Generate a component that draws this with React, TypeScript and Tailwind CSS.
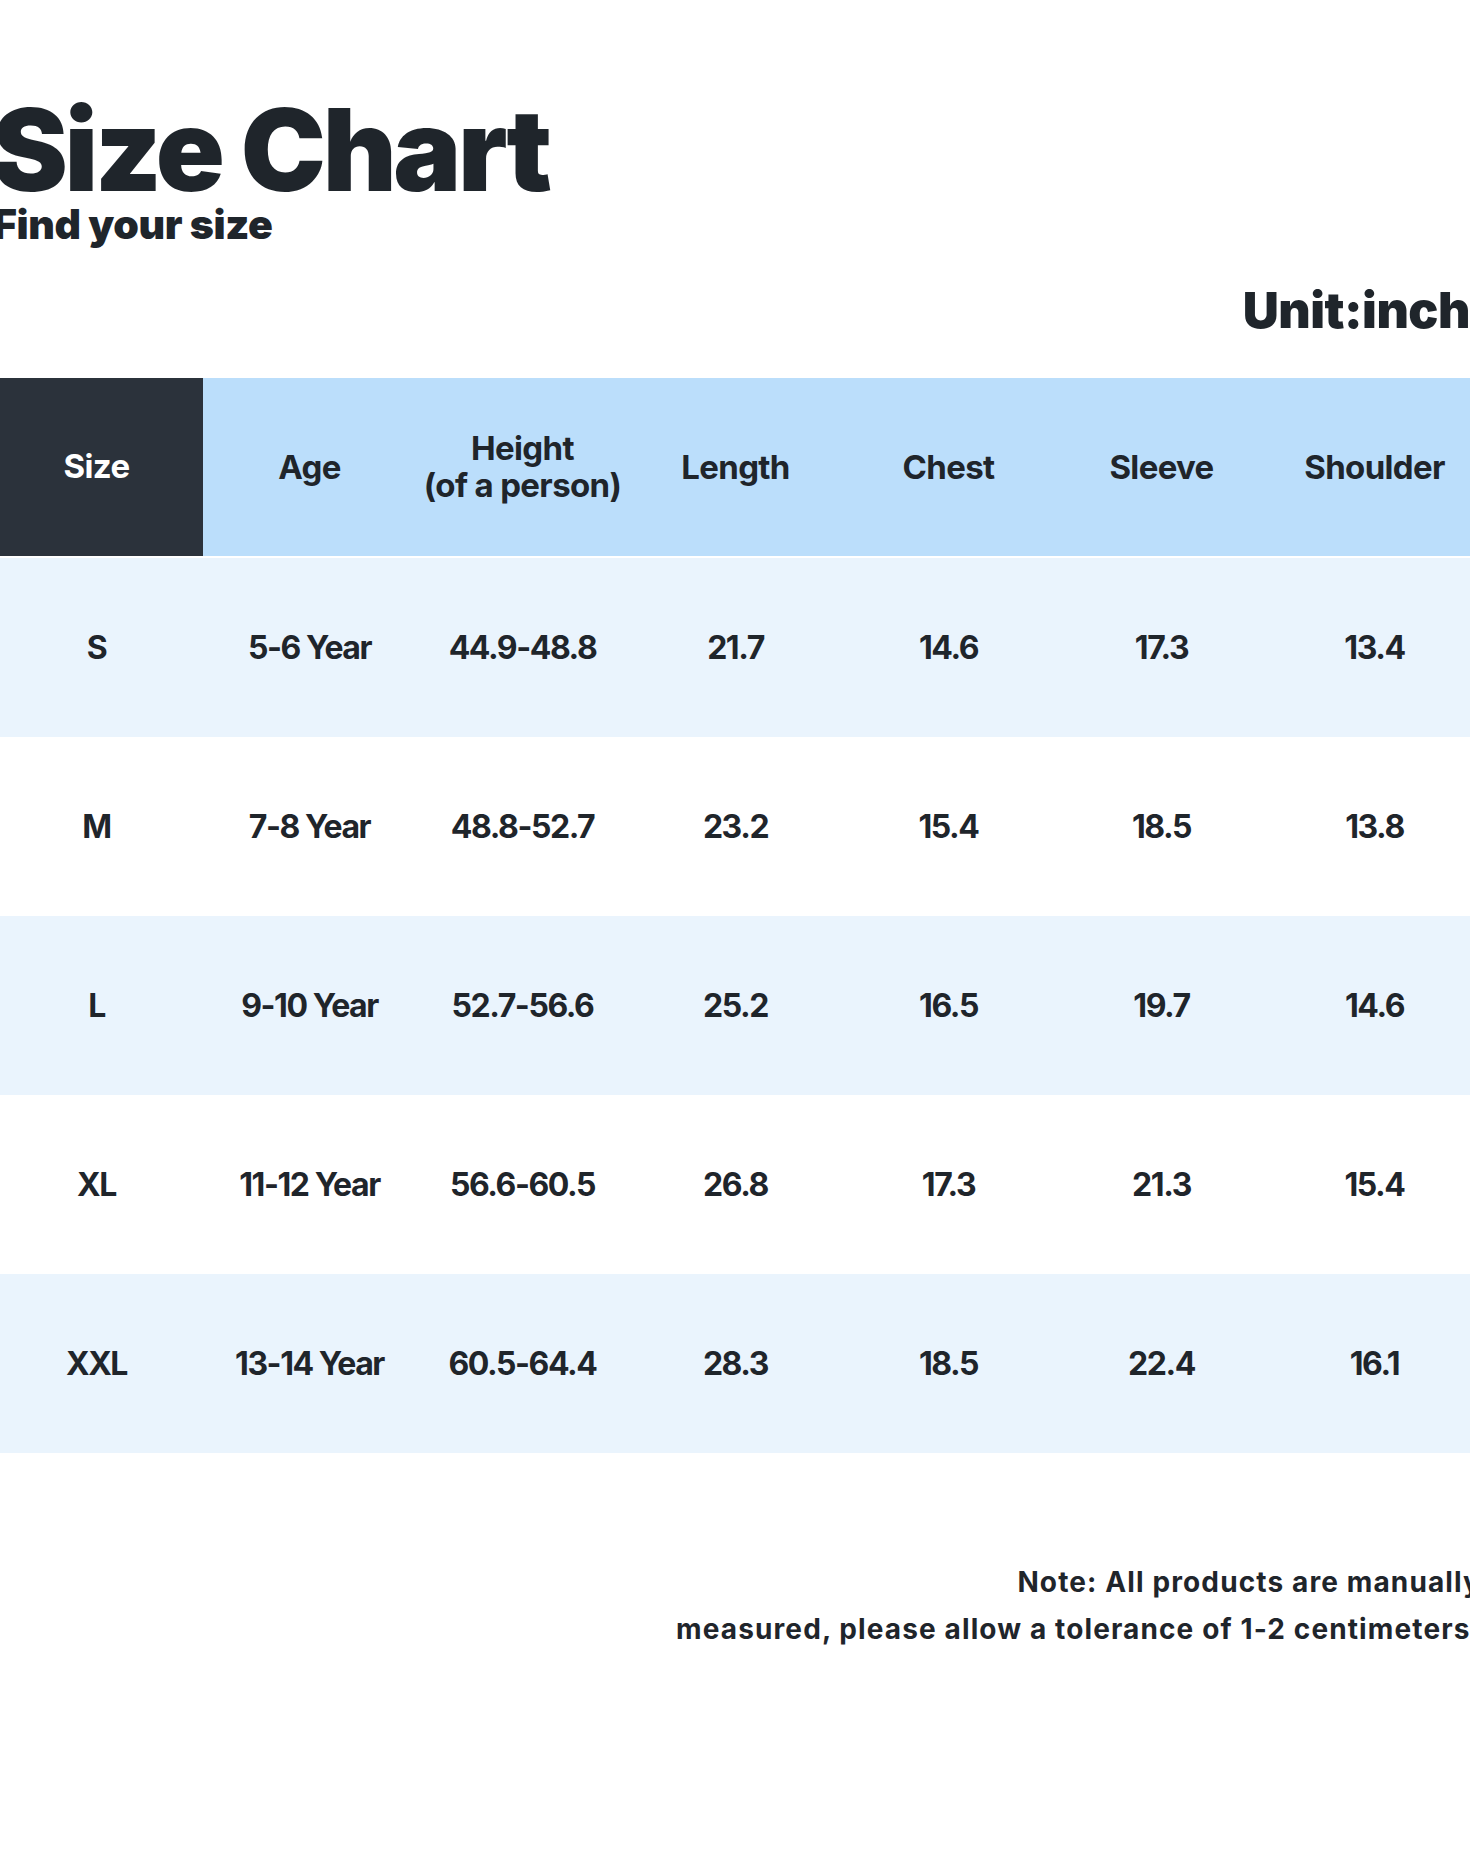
import React from 'react';

const headers = ['Age', 'Height', 'Length', 'Chest', 'Sleeve', 'Shoulder'];

const rows = [
  ['S', '5-6 Year', '44.9-48.8', '21.7', '14.6', '17.3', '13.4'],
  ['M', '7-8 Year', '48.8-52.7', '23.2', '15.4', '18.5', '13.8'],
  ['L', '9-10 Year', '52.7-56.6', '25.2', '16.5', '19.7', '14.6'],
  ['XL', '11-12 Year', '56.6-60.5', '26.8', '17.3', '21.3', '15.4'],
  ['XXL', '13-14 Year', '60.5-64.4', '28.3', '18.5', '22.4', '16.1'],
];

const font = { fontFamily: 'Inter, "Noto Sans", sans-serif' };

export default function App() {
  return (
    <div className="w-[1470px] h-[1862px] bg-white overflow-hidden text-[#1f252b]" style={font}>
      <div className="ml-[-10px] w-[1491px] pt-[93px]">
        <h1 className="text-[114px] leading-none font-black tracking-[-0.03em] pl-[2px]">Size Chart</h1>
        <p className="mt-[-3px] text-[41px] leading-none font-black tracking-[-0.01em] pl-[3px]">Find your size</p>
        <p className="mt-[40px] text-[50px] leading-none font-black text-right pr-[11px] tracking-[-0.01em]">Unit:inch</p>

        <div className="mt-[43px]">
          <div className="grid grid-cols-7 h-[178px] bg-[#bbdefb] text-[33px] font-bold tracking-[-0.02em]">
            <div className="bg-[#2b323b] text-white flex items-center justify-center">Size</div>
            {headers.map((h) => (
              <div key={h} className="flex items-center justify-center text-center leading-[37px]">
                {h === 'Height' ? (
                  <span>
                    Height
                    <br />
                    (of a person)
                  </span>
                ) : (
                  h
                )}
              </div>
            ))}
          </div>
          <div className="h-[2px]" />
          {rows.map((r, i) => (
            <div
              key={r[0]}
              className={`grid grid-cols-7 h-[179px] text-[32px] font-bold tracking-[-0.045em] ${
                i % 2 === 0 ? 'bg-[#eaf4fd]' : 'bg-white'
              }`}
            >
              {r.map((c, j) => (
                <div key={j} className="flex items-center justify-center">
                  {c}
                </div>
              ))}
            </div>
          ))}
        </div>

        <div className="mt-[106px] text-right text-[28px] leading-[47px] font-bold tracking-[0.04em]">
          <p>Note: All products are manually</p>
          <p>measured, please allow a tolerance of 1-2 centimeters.</p>
        </div>
      </div>
    </div>
  );
}
